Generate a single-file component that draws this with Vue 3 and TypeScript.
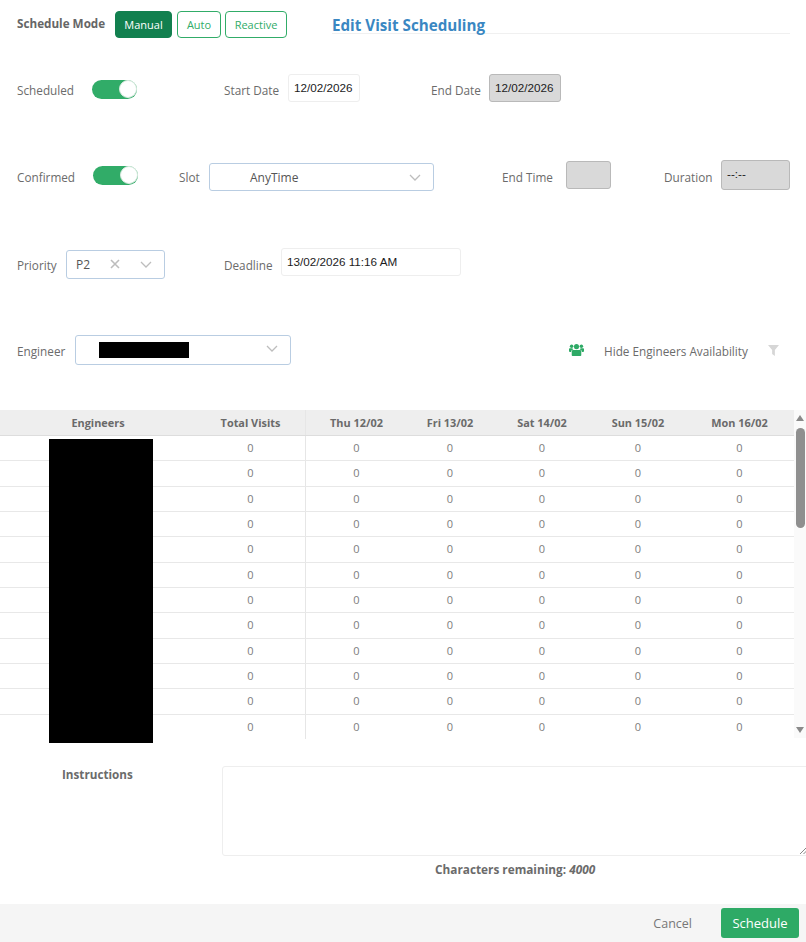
<script setup lang="ts">
const days: string[] = ['Thu 12/02', 'Fri 13/02', 'Sat 14/02', 'Sun 15/02', 'Mon 16/02']
const rows: number[] = Array.from({ length: 12 }, (_, i) => i)
</script>

<template>
  <div class="page">
    <div class="row r1">
      <span class="mode-label">Schedule Mode</span>
      <div class="modes">
        <button class="mode active">Manual</button>
        <button class="mode auto">Auto</button>
        <button class="mode reactive">Reactive</button>
      </div>
      <div class="title-wrap"><h1 class="title">Edit Visit Scheduling</h1></div>
    </div>

    <div class="row r2">
      <span class="lab w75">Scheduled</span>
      <span class="toggle"><i></i></span>
      <span class="lab start">Start Date</span>
      <div class="field date">12/02/2026</div>
      <span class="lab enddate">End Date</span>
      <div class="field date off">12/02/2026</div>
    </div>

    <div class="row r3">
      <span class="lab w76">Confirmed</span>
      <span class="toggle"><i></i></span>
      <span class="lab slot">Slot</span>
      <div class="select slotsel">
        <span class="val">AnyTime</span>
        <svg class="chev" viewBox="0 0 12 7"><path d="M1 1l5 5 5-5" /></svg>
      </div>
      <span class="lab endtime">End Time</span>
      <div class="field off et"></div>
      <span class="lab dur">Duration</span>
      <div class="field off du">--:--</div>
    </div>

    <div class="row r4">
      <span class="lab w49">Priority</span>
      <div class="select prio">
        <span class="p2">P2</span>
        <svg class="x" viewBox="0 0 10 10"><path d="M1 1l8 8M9 1l-8 8" /></svg>
        <svg class="chev" viewBox="0 0 12 7"><path d="M1 1l5 5 5-5" /></svg>
      </div>
      <span class="lab deadline">Deadline</span>
      <div class="field dl">13/02/2026 11:16 AM</div>
    </div>

    <div class="row r5">
      <span class="lab w58">Engineer</span>
      <div class="select eng">
        <span class="mask"></span>
        <svg class="chev" viewBox="0 0 12 7"><path d="M1 1l5 5 5-5" /></svg>
      </div>
      <svg class="users" viewBox="0 0 16 14">
        <circle cx="8" cy="3.4" r="2.7" />
        <circle cx="2.8" cy="3" r="1.9" />
        <circle cx="13.2" cy="3" r="1.9" />
        <path d="M4.4 7h7.2c.9 0 1.5.7 1.5 1.6v3.6c0 .6-.5 1.1-1.1 1.1H4c-.6 0-1.1-.5-1.1-1.1V8.6C2.900 7.700 3.500 7 4.400 7z" />
        <path d="M0 6.200C0 5.600.5 5.200 1.100 5.200h2.500c.3.500.7.900 1.100 1.200-1.400.2-2.500 1.100-2.500 2.600H1C.4 9 0 8.600 0 8zM16 6.200c0-.6-.5-1-1.100-1h-2.500c-.3.500-.7.900-1.100 1.200 1.400.2 2.500 1.100 2.500 2.600H15c.6 0 1-.4 1-1z" />
      </svg>
      <span class="lab hide">Hide Engineers Availability</span>
      <svg class="filter" viewBox="0 0 12 12"><path d="M0 0h12L7.500 5.500V12L4.500 9.800V5.500z" /></svg>
    </div>

    <div class="tablewrap">
      <div class="grid">
        <div class="head">
          <span class="c-eng">Engineers</span>
          <span class="c-tot">Total Visits</span>
          <span v-for="(d, i) in days" :key="d" :class="'c-d' + i">{{ d }}</span>
        </div>
        <div v-for="r in rows" :key="r" class="tr">
          <span class="c-eng"></span>
          <span class="c-tot">0</span>
          <span v-for="(d, i) in days" :key="d" :class="'c-d' + i">0</span>
        </div>
      </div>
      <div class="scroll">
        <span class="up"></span>
        <span class="thumb"></span>
        <span class="down"></span>
      </div>
      <div class="redact"></div>
    </div>

    <div class="instr">
      <label class="instr-label">Instructions</label>
      <div class="area">
        <svg class="grip" viewBox="0 0 8 8"><path d="M0 8L8 0M4 8l4-4" /></svg>
      </div>
    </div>
    <div class="remain">Characters remaining: <em>4000</em></div>

    <div class="footer">
      <span class="cancel">Cancel</span>
      <button class="sched">Schedule</button>
    </div>
  </div>
</template>

<style scoped>
.page {
  position: relative;
  width: 806px;
  height: 942px;
  overflow: hidden;
  background: #fff;
  font-family: "Open Sans", sans-serif;
  font-size: 12px;
  color: #6b6b6b;
}
.row {
  display: flex;
  align-items: center;
  padding-left: 17px;
}
.r1 { padding-top: 11px; height: 27px; align-items: flex-start; }
.r2 { margin-top: 36px; height: 28px; }
.r3 { margin-top: 60px; height: 30px; }
.r4 { margin-top: 57px; height: 30px; }
.r5 { margin-top: 56px; height: 30px; }

.mode-label { width: 98px; font-size: 11.7px; font-weight: 700; line-height: 25px; color: #666; white-space: nowrap; }
.modes { display: flex; gap: 4px; }
.mode {
  height: 27px;
  padding: 0;
  border: 1px solid #31ac68;
  border-radius: 4px;
  background: #fff;
  color: #31ac68;
  font: 11px "Open Sans", sans-serif;
}
.mode.active { width: 57px; background: #12804f; border-color: #12804f; color: #fff; margin-right: 1px; }
.mode.auto { width: 44px; }
.mode.reactive { width: 62px; }
.title-wrap { margin-left: 45px; width: 458px; height: 22px; border-bottom: 1px solid #f0f0f0; }
.title { margin: 0; font-size: 15.2px; font-weight: 700; line-height: 28px; color: #3a87c2; white-space: nowrap; }

.lab { white-space: nowrap; font-size: 11.75px; flex: none; }
.r2 .lab { margin-top: 4px; }
.r4 .lab, .r5 .lab { margin-top: 2px; }
.w75 { width: 75px; }
.w76 { width: 76px; }
.w49 { width: 49px; }
.w58 { width: 58px; }
.toggle {
  position: relative;
  flex: none;
  width: 45px;
  height: 19px;
  border-radius: 10px;
  background: #31ac68;
}
.toggle i {
  position: absolute;
  top: 0;
  right: 0;
  width: 18px;
  height: 18px;
  border-radius: 50%;
  background: #fff;
  border: 1px solid #d8eadf;
  box-sizing: border-box;
}
.r2 .toggle { margin-top: 3px; }
.r3 .toggle { margin-top: -3px; }
.start { margin-left: 87px; width: 64px; }
.enddate { margin-left: 71px; width: 58px; }
.slot { margin-left: 41px; width: 30px; }
.endtime { margin-left: 68px; width: 64px; }
.dur { margin-left: 53px; width: 57px; }
.deadline { margin-left: 59px; width: 57px; }

.field {
  flex: none;
  box-sizing: border-box;
  border: 1px solid #eee;
  border-radius: 3px;
  background: #fff;
  font: 11.7px "Liberation Sans", Arial, sans-serif;
  color: #1c1c1c;
  height: 28px;
  line-height: 25px;
  padding-left: 5px;
}
.date { width: 72px; margin-top: 0; }
.off { background: #d9d9d9; border-color: #b9b9b9; }
.et { width: 45px; margin-top: -4px; }
.du { width: 69px; height: 30px; line-height: 26px; margin-top: -4px; padding-left: 5px; }
.dl { width: 180px; margin-top: -5px; }

.select {
  flex: none;
  position: relative;
  box-sizing: border-box;
  height: 28px;
  border: 1px solid #b9cde2;
  border-radius: 3px;
  background: #fff;
  display: flex;
  align-items: center;
  color: #555;
}
.chev { position: absolute; right: 12px; top: 10px; width: 12px; height: 7px; fill: none; stroke: #bdbdbd; stroke-width: 1.3; }
.slotsel { width: 225px; }
.slotsel .val { margin-left: 40px; }
.prio { width: 99px; height: 29px; }
.p2 { margin-left: 9px; }
.x { position: absolute; left: 43px; top: 8px; width: 10px; height: 10px; fill: none; stroke: #bdbdbd; stroke-width: 1.6; }
.eng { width: 216px; height: 30px; }
.eng .chev { right: 12px; top: 9px; }
.mask { margin-left: 23px; margin-top: 0; width: 90px; height: 16px; background: #000; }
.users { flex: none; margin-left: 278px; width: 15px; height: 14px; fill: #2eaa66; margin-top: 0; }
.r5 .hide { margin-left: 20px; margin-top: 2px; width: 164px; }
.filter { flex: none; width: 11px; height: 11px; fill: #d6d6d6; margin-top: 0; }

.tablewrap { position: relative; margin-top: 45px; height: 328px; display: flex; }
.grid { width: 794px; flex: none; }
.head, .tr { display: grid; grid-template-columns: 196px 110px 101px 86px 98px 94px 109px; text-align: center; align-items: center; }
.head { height: 25px; background: #eee; border-bottom: 1px solid #ddd; box-sizing: content-box; font-size: 10.9px; font-weight: 700; color: #6a6a6a; }
.tr { height: 25.35px; box-sizing: border-box; border-bottom: 1px solid #e8e8e8; font-size: 11px; color: #7d7d7d; }
.tr:last-child { height: 23px; border-bottom: 0; }
.head span { display: block; height: 100%; line-height: 25px; }
.tr span { display: block; height: 100%; line-height: 24px; }
.c-tot { border-right: 1px solid #e6e6e6; }
.scroll { position: relative; width: 12px; height: 328px; background: #fafafa; }
.up { position: absolute; left: 2px; top: 5px; border: 4.5px solid transparent; border-top: 0; border-bottom: 6px solid #8a8a8a; }
.thumb { position: absolute; left: 2px; top: 18px; width: 9px; height: 100px; border-radius: 5px; background: #8f8f8f; }
.down { position: absolute; left: 2px; top: 317px; border: 4.5px solid transparent; border-bottom: 0; border-top: 6px solid #8a8a8a; }
.redact { position: absolute; left: 49px; top: 29px; width: 104px; height: 304px; background: #000; }

.instr { display: flex; margin-top: 28px; height: 90px; }
.instr-label { flex: none; width: 222px; box-sizing: border-box; padding-left: 62px; font-size: 11.7px; font-weight: 700; line-height: 16px; color: #6b6b6b; }
.area { position: relative; flex: none; width: 600px; height: 90px; box-sizing: border-box; border: 1px solid #eee; border-radius: 3px; }
.grip { position: absolute; left: 577px; bottom: 1px; width: 7px; height: 7px; fill: none; stroke: #777; stroke-width: 1; }
.remain { margin-top: 5px; padding-left: 435px; font-size: 11.8px; font-weight: 700; line-height: 16px; color: #6b6b6b; }
.remain em { font-style: italic; }
.footer {
  position: absolute;
  left: 0;
  right: 0;
  top: 904px;
  height: 38px;
  background: #f5f5f5;
  display: flex;
  align-items: center;
  justify-content: flex-end;
  padding-right: 7px;
}
.cancel { font-size: 12.5px; color: #777; margin-right: 29px; }
.sched {
  width: 78px;
  height: 30px;
  border: 0;
  border-radius: 3px;
  background: #2eaa66;
  color: #fff;
  font: 13px "Open Sans", sans-serif;
}
</style>
